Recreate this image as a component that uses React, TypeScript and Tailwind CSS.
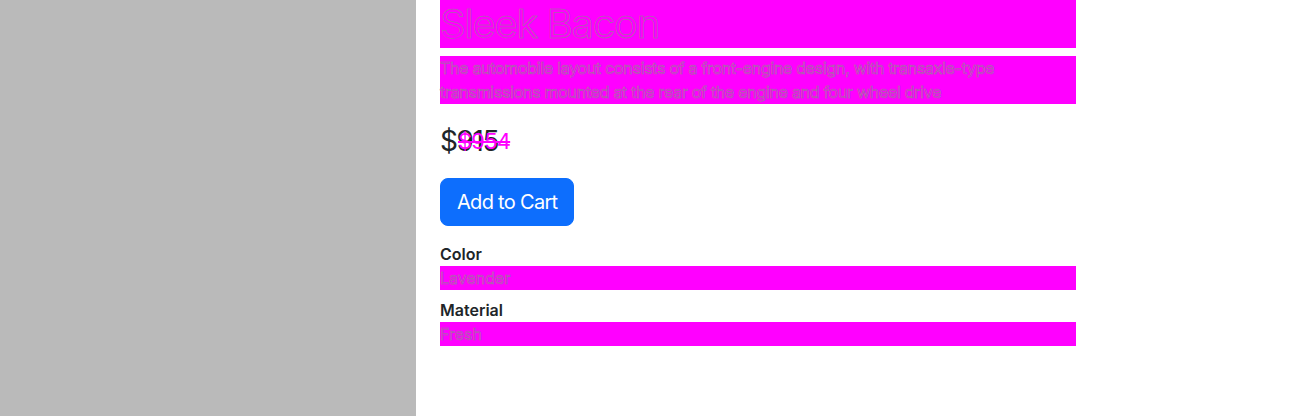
import React from "react";

const product = {
  name: "Sleek Bacon",
  description:
    "The automobile layout consists of a front-engine design, with transaxle-type transmissions mounted at the rear of the engine and four wheel drive",
  price: "$915",
  oldPrice: "$954",
  color: "Lavender",
  material: "Fresh",
};

// placeholder blocks are magenta with a faint outlined text
const ghost = "bg-[#ff00ff] text-[#ff00ff] [-webkit-text-stroke:0.5px_#8a8a8a]";

export default function App() {
  return (
    <div className="flex h-[416px] w-full bg-white font-['Inter',sans-serif] text-[#212529]">
      <div className="w-[416px] shrink-0 bg-[#bababa]" />

      <div className="ml-6 flex w-[636px] flex-col">
        <h1 className={`${ghost} text-[40px] leading-[48px] font-normal tracking-[-1.4px]`}>{product.name}</h1>
        <p className={`${ghost} mt-2 text-[16px] leading-6 tracking-[-0.3px]`}>{product.description}</p>

        <div className="relative mt-5 h-[34px] text-[28px] leading-[34px] tracking-[-1.4px]">
          <span>{product.price}</span>
          <span className="absolute top-0 left-[18px] text-[22px] leading-[34px] tracking-[-0.8px] text-[#ff00ff] line-through">
            {product.oldPrice}
          </span>
        </div>

        <button
          type="button"
          className="mt-5 w-fit rounded-lg border border-[#0d6efd] bg-[#0d6efd] px-4 py-2 text-[20px] leading-[30px] tracking-[-0.7px] text-white"
        >
          Add to Cart
        </button>

        <div className="mt-4 flex flex-col">
          <span className="text-[16px] leading-6 font-semibold">Color</span>
          <span className={`${ghost} text-[16px] leading-6`}>{product.color}</span>
          <span className="mt-2 text-[16px] leading-6 font-semibold">Material</span>
          <span className={`${ghost} text-[16px] leading-6`}>{product.material}</span>
        </div>
      </div>
    </div>
  );
}
